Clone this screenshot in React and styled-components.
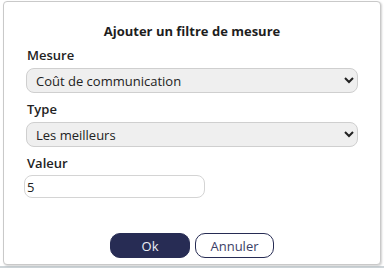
import styled, { createGlobalStyle } from "styled-components";

const GlobalStyles = createGlobalStyle`
  html, body {
    margin: 0;
    padding: 0;
    background: #fff;
  }
  body {
    font-family: "Open Sans", "Liberation Sans", sans-serif;
    color: #222;
  }
`;

function App() {
  return (
    <>
      <GlobalStyles />
      <Page>
        <Dialog>
          <Title>Ajouter un filtre de mesure</Title>
          <Field>
            <Label>Mesure</Label>
            <Select defaultValue="cout">
              <option value="cout">Coût de communication</option>
            </Select>
          </Field>
          <Field>
            <Label>Type</Label>
            <Select defaultValue="best">
              <option value="best">Les meilleurs</option>
            </Select>
          </Field>
          <Field $gap={3}>
            <Label>Valeur</Label>
            <Input type="text" defaultValue="5" />
          </Field>
          <Actions>
            <Button $primary>Ok</Button>
            <Button>Annuler</Button>
          </Actions>
        </Dialog>
      </Page>
    </>
  );
}

const Page = styled.div`
  width: 384px;
  height: 268px;
  padding: 1px 3px 0 3px;
  box-sizing: border-box;
  background: #fff;
  border-bottom: 2px solid #cdd4d8;
`;

const Dialog = styled.div`
  width: 378px;
  height: 264px;
  box-sizing: border-box;
  border: 1px solid #c9c9c9;
  border-radius: 4px;
  background: #fff;
  box-shadow: 1px 1px 2px rgba(0, 0, 0, 0.18);
  padding: 20px 22px 0;
  display: flex;
  flex-direction: column;
`;

const Title = styled.h2`
  margin: 0 0 6px;
  font-size: 13px;
  line-height: 18px;
  font-weight: 700;
  text-align: center;
  color: #1e1e1e;
`;

const Field = styled.div`
  display: flex;
  flex-direction: column;
  gap: ${(p) => p.$gap ?? 4}px;
  margin-bottom: 7px;
`;

const Label = styled.label`
  font-size: 13px;
  line-height: 18px;
  font-weight: 600;
  color: #222;
  padding-left: 1px;
`;

const Select = styled.select`
  width: 332px;
  height: 25px;
  box-sizing: border-box;
  margin: 0;
  border: 1px solid #cfcfcf;
  border-radius: 8px;
  background: #efefef;
  font-family: "Open Sans", "Liberation Sans", sans-serif;
  font-size: 13px;
  color: #222;
  padding: 0 3px 0 5px;
  outline: none;
`;

const Input = styled.input`
  width: 181px;
  height: 23px;
  box-sizing: border-box;
  margin: 0 0 0 -2px;
  border: 1px solid #d4d4d4;
  border-radius: 8px;
  background: #fff;
  font-family: "Open Sans", "Liberation Sans", sans-serif;
  font-size: 13px;
  color: #222;
  padding: 0 2px;
  outline: none;
`;

const Actions = styled.div`
  margin-top: 28px;
  display: flex;
  justify-content: center;
  gap: 5px;
`;

const Button = styled.button`
  width: ${(p) => (p.$primary ? 80 : 79)}px;
  height: 25px;
  box-sizing: border-box;
  border-radius: 10px;
  border: 1px solid #272c54;
  background: ${(p) => (p.$primary ? "#272c54" : "#fff")};
  color: ${(p) => (p.$primary ? "#eceef5" : "#3b4066")};
  font-family: "Open Sans", "Liberation Sans", sans-serif;
  font-size: 13px;
  padding: 0;
  cursor: pointer;
`;

export default App;
